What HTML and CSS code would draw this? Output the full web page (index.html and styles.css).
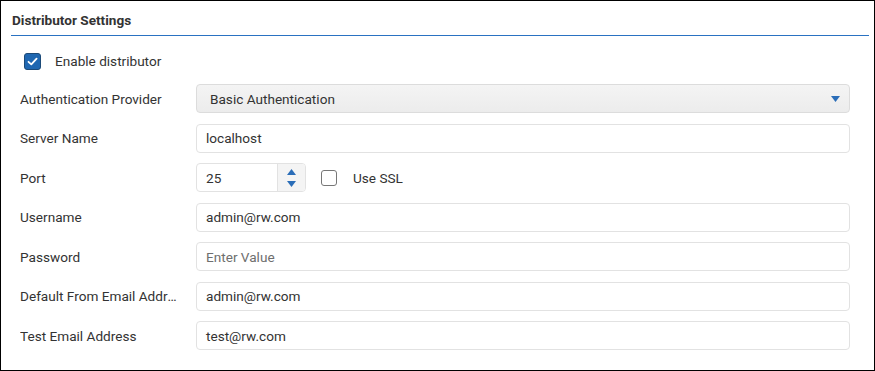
FILE: index.html
```html
<!DOCTYPE html>
<html>
<head>
<meta charset="utf-8">
<link rel="stylesheet" href="styles.css">
</head>
<body>
<div class="panel">
  <div class="header">Distributor Settings</div>
  <div class="enable">
    <span class="cb cb-on">
      <svg width="13" height="13" viewBox="0 0 13 13"><path d="M2.5 6.8 L5.3 9.4 L10.6 3.6" fill="none" stroke="#fff" stroke-width="1.8" stroke-linecap="round" stroke-linejoin="round"/></svg>
    </span>
    <span class="enable-label">Enable distributor</span>
  </div>
  <div class="form">
    <div class="label">Authentication Provider</div>
    <div class="field select">
      <span>Basic Authentication</span>
      <svg class="caret" width="9" height="6" viewBox="0 0 9 6"><path d="M0 0 H9 L4.5 6 Z" fill="#2a6db8"/></svg>
    </div>

    <div class="label">Server Name</div>
    <div class="field">localhost</div>

    <div class="label">Port</div>
    <div class="port-row">
      <div class="field port">
        <span class="port-val">25</span>
        <span class="spin">
          <svg width="9" height="6" viewBox="0 0 9 6"><path d="M0 6 H9 L4.5 0 Z" fill="#2a6db8"/></svg>
          <svg width="9" height="6" viewBox="0 0 9 6"><path d="M0 0 H9 L4.5 6 Z" fill="#2a6db8"/></svg>
        </span>
      </div>
      <span class="cb cb-off"></span>
      <span class="ssl-label">Use SSL</span>
    </div>

    <div class="label">Username</div>
    <div class="field">admin@rw.com</div>

    <div class="label">Password</div>
    <div class="field placeholder">Enter Value</div>

    <div class="label">Default From Email Address</div>
    <div class="field">admin@rw.com</div>

    <div class="label">Test Email Address</div>
    <div class="field">test@rw.com</div>
  </div>
</div>
</body>
</html>
```
FILE: styles.css
```css
* { box-sizing: border-box; }
html, body { margin: 0; padding: 0; background: #fff; }
body { font-family: Roboto, "Liberation Sans", Arial, sans-serif; color: #333; }
.panel {
  width: 875px;
  height: 371px;
  border: 1px solid #000;
  background: #fff;
}
.header {
  margin: 0 5px 0 10px;
  padding: 11px 1px 7px;
  line-height: 16px;
  font-size: 13.6px;
  font-weight: bold;
  color: #333;
  border-bottom: 1px solid #2a72c2;
}
.enable {
  display: flex;
  padding: 17px 0 0 23px;
  height: 48px;
  align-items: flex-start;
}
.cb {
  display: inline-flex;
  align-items: center;
  justify-content: center;
  border-radius: 3px;
  flex: none;
}
.cb-on {
  width: 17px;
  height: 17px;
  background: #1f67b1;
  border: 1px solid #1c4a78;
}
.cb-off {
  width: 16px;
  height: 16px;
  border: 1px solid #777;
  background: #fff;
}
.enable-label {
  margin-left: 14px;
  font-size: 13.6px;
  line-height: 17px;
}
.form {
  display: grid;
  grid-template-columns: 176px 1fr;
  row-gap: 10.5px;
  padding: 0 24px 0 19px;
  align-items: center;
}
.label {
  font-size: 13.6px;
  white-space: nowrap;
  overflow: hidden;
  text-overflow: ellipsis;
  margin-right: 18px;
  min-width: 0;
}
.field {
  height: 29px;
  border: 1px solid #e2e2e2;
  border-radius: 4px;
  padding: 0 9px;
  font-size: 13.6px;
  display: flex;
  align-items: center;
  color: #333;
  background: #fff;
}
.placeholder { color: #6e6e6e; }
.select {
  background: linear-gradient(#f4f4f4, #ececec);
  border-color: #dcdcdc;
  justify-content: space-between;
  padding-left: 13px;
  padding-right: 9px;
}
.caret { margin-top: 1px; }
.port-row {
  display: flex;
  align-items: center;
}
.port {
  width: 110px;
  padding: 0;
  overflow: hidden;
}
.port-val {
  flex: 1;
  padding-left: 9px;
}
.spin {
  width: 28px;
  height: 100%;
  background: #f4f4f4;
  border-left: 1px solid #e2e2e2;
  display: flex;
  flex-direction: column;
  align-items: center;
  justify-content: center;
  gap: 6px;
}
.port-row .cb-off { margin-left: 15px; }
.ssl-label {
  margin-left: 16px;
  font-size: 13.6px;
}
```
